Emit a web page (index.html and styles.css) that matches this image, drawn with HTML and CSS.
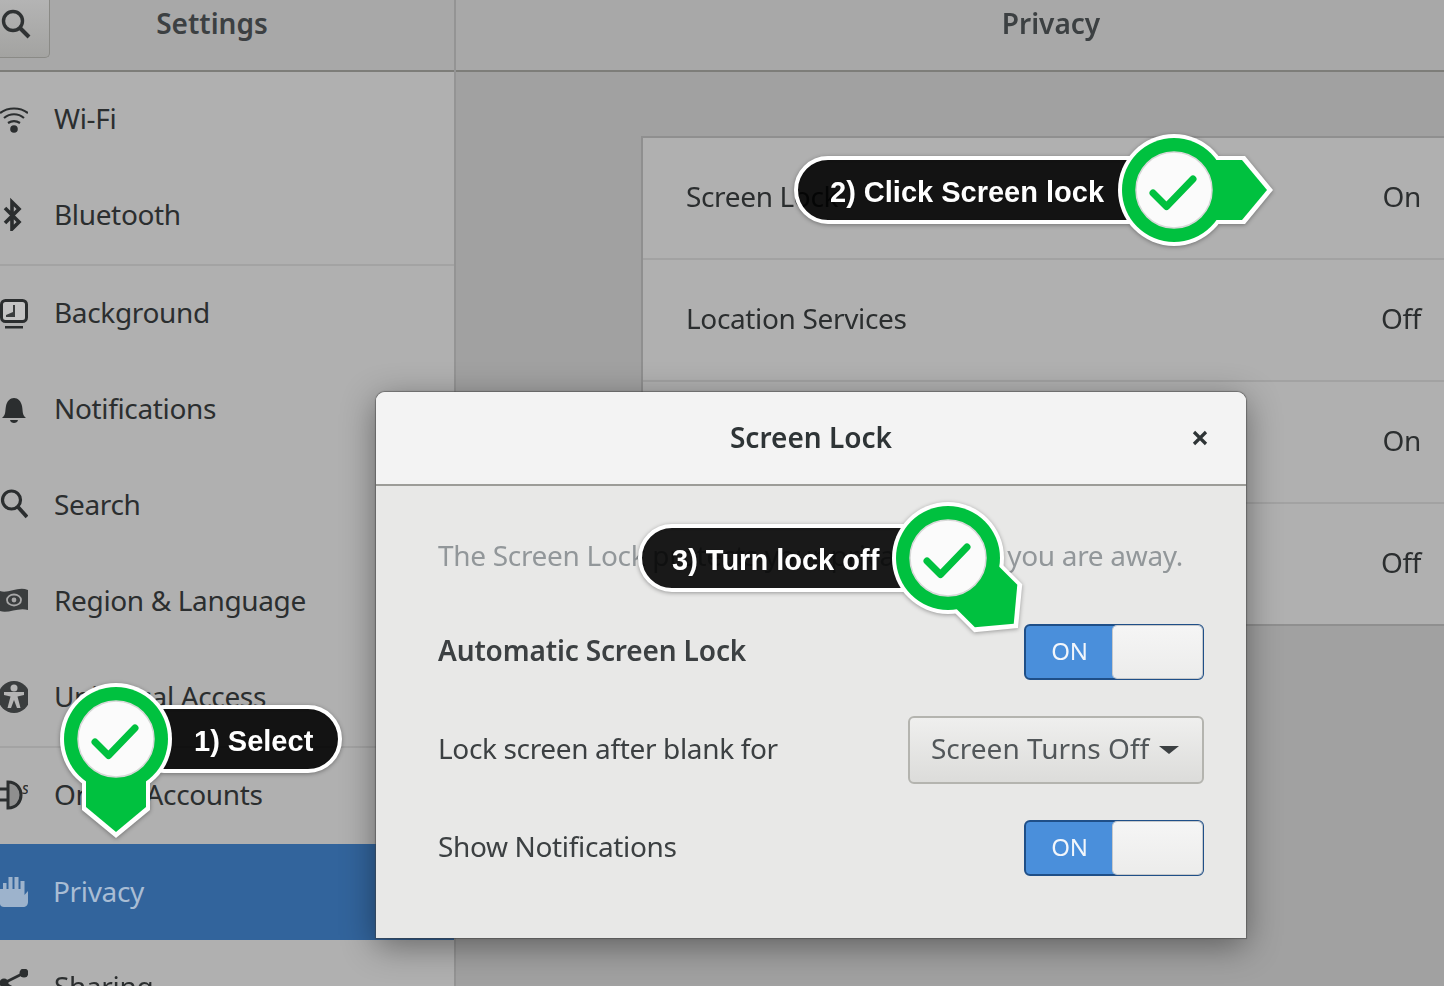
FILE: index.html
```html
<!DOCTYPE html>
<html>
  <head>
    <meta charset="utf-8" />
    <title>Settings - Privacy</title>
    <link rel="stylesheet" href="styles.css">
  </head>

  <body>
    <!-- shared pin shape for the three callouts -->
    <svg class="defs" width="0" height="0">
      <defs>
        <g id="pin-body">
          <circle cx="0" cy="0" r="56" fill="#fff" />
          <polygon points="-34,0 34,0 34,71 0,99 -34,71" fill="#fff" />
          <circle cx="0" cy="0" r="52" fill="#00c13f" />
          <polygon points="-30,0 30,0 30,68 0,93 -30,68" fill="#00c13f" />
        </g>
        <g id="pin-face">
          <circle cx="0" cy="0" r="38" fill="#fbfbfb" stroke="#d8d8d8" stroke-width="1.5" />
          <path d="M-21 3 L-7.5 16.5 L19 -11" fill="none" stroke="#00c13f" stroke-width="7" stroke-linecap="round" stroke-linejoin="round" />
        </g>
      </defs>
    </svg>

    <div class="screen">
      <!-- Sidebar -->
      <aside class="sidebar">
        <header class="bar">
          <button class="search-button">
            <svg width="32" height="40" viewBox="0 0 32 40"><circle cx="13" cy="12" r="9.5" fill="none" stroke="#2f3233" stroke-width="3.4" /><path d="M20 19 L29 28" stroke="#2f3233" stroke-width="4" /></svg>
          </button>
          <h1 class="bar-title bar-title-side">Settings</h1>
        </header>

        <ul class="nav">
          <li class="nav-item">
            <svg class="nav-icon" viewBox="0 0 28 34"><g fill="none" stroke="#2b2e2f" stroke-width="2.2"><path d="M0 12 C8 6 20 6 28 12" /><path d="M4 17 C10 12 18 12 24 17" /><path d="M8 22 C12 19.500 16 19.500 20 22" /></g><circle cx="14" cy="28" r="3.800" fill="#2b2e2f" /></svg>
            <span>Wi-Fi</span>
          </li>
          <li class="nav-item">
            <svg class="nav-icon" viewBox="0 0 28 34"><path d="M5 11 L19 25 L12 32 V5 L19 12 L5 26" fill="none" stroke="#2b2e2f" stroke-width="3.600" /></svg>
            <span>Bluetooth</span>
          </li>
          <li class="nav-sep"></li>
          <li class="nav-item">
            <svg class="nav-icon" viewBox="0 0 28 34"><rect x="1.500" y="5.500" width="25" height="21" rx="4" fill="#c4c4c4" stroke="#2b2e2f" stroke-width="3" /><path d="M6 22 H15 V10 H13 V17 L6 20 Z" fill="#3a3d3e" /><rect x="5" y="31" width="18" height="2.500" fill="#2b2e2f" /></svg>
            <span>Background</span>
          </li>
          <li class="nav-item">
            <svg class="nav-icon" viewBox="0 0 28 34"><path d="M2 27 C6 24 5 20 6 15 C7 10 10 7 14 7 C18 7 21 10 22 15 C23 20 22 24 26 27 Z" fill="#2b2e2f" /><path d="M10 29 H18 C17.500 33 10.500 33 10 29 Z" fill="#2b2e2f" /></svg>
            <span>Notifications</span>
          </li>
          <li class="nav-item">
            <svg class="nav-icon" viewBox="0 0 28 34"><circle cx="11.500" cy="13" r="9" fill="none" stroke="#2b2e2f" stroke-width="3.200" /><path d="M18 20 L27 30" stroke="#2b2e2f" stroke-width="3.800" /></svg>
            <span>Search</span>
          </li>
          <li class="nav-item">
            <svg class="nav-icon" viewBox="0 0 28 34"><path d="M0 8 C8 11 18 3 28 7 V27 C18 24 8 31 0 28 Z" fill="#3a3d3e" /><ellipse cx="14" cy="17" rx="7" ry="5.500" fill="none" stroke="#a8a8a8" stroke-width="1.800" /><circle cx="14" cy="17" r="2.400" fill="#a8a8a8" /></svg>
            <span>Region &amp; Language</span>
          </li>
          <li class="nav-item">
            <svg class="nav-icon" viewBox="0 0 28 34"><circle cx="14" cy="18" r="16" fill="#3a3d3e" /><circle cx="14" cy="9" r="3.500" fill="#b5b5b5" /><path d="M4 13 L24 13 L24 16 L17.500 17.500 L20.500 29 L17 29 L14 21 L11 29 L7.500 29 L10.500 17.500 L4 16 Z" fill="#b5b5b5" /></svg>
            <span>Universal Access</span>
          </li>
          <li class="nav-sep"></li>
          <li class="nav-item">
            <svg class="nav-icon" viewBox="0 0 28 34"><path d="M0 12 H8 M0 23 H8" stroke="#2b2e2f" stroke-width="3" /><path d="M8 5 V31 C17 31 21 24 21 18 C21 12 17 5 8 5 Z" fill="#8f8f8f" stroke="#2b2e2f" stroke-width="3" /><text class="nav-icon-s" x="22" y="17">s</text></svg>
            <span>Online Accounts</span>
          </li>
          <li class="nav-item nav-item-active">
            <svg class="nav-icon" viewBox="0 0 28 34"><path d="M0 15 H3 V9 H6.500 V15 H8.500 V3 H12.500 V15 H14.500 V3 H18.500 V15 H20.500 V7 H24.500 V21 L28 17 V28 C28 31 26 33 23 33 H4 C2 33 0 32 0 30 Z" fill="#9db3cc" /></svg>
            <span>Privacy</span>
          </li>
          <li class="nav-item">
            <svg class="nav-icon" viewBox="0 0 28 34"><path d="M4 14 L24 4 M4 14 L24 25" stroke="#2b2e2f" stroke-width="2.600" /><circle cx="24" cy="4" r="4.500" fill="#2b2e2f" /><circle cx="4" cy="14" r="4.500" fill="#2b2e2f" /><circle cx="24" cy="25" r="4.500" fill="#2b2e2f" /></svg>
            <span>Sharing</span>
          </li>
        </ul>
      </aside>

      <!-- Privacy panel -->
      <main class="panel">
        <header class="bar">
          <h1 class="bar-title bar-title-main">Privacy</h1>
        </header>
        <div class="panel-body">
          <ul class="privacy-list">
            <li class="privacy-row"><span>Screen Lock</span><span class="privacy-value">On</span></li>
            <li class="privacy-row"><span>Location Services</span><span class="privacy-value">Off</span></li>
            <li class="privacy-row"><span class="privacy-value">On</span></li>
            <li class="privacy-row"><span class="privacy-value">Off</span></li>
          </ul>
        </div>
      </main>

      <!-- Screen Lock dialog -->
      <section class="dialog">
        <header class="dialog-head">
          <span></span>
          <h2 class="dialog-title">Screen Lock</h2>
          <svg class="dialog-close" width="18" height="18" viewBox="0 0 18 18"><path d="M3 3 L15 15 M15 3 L3 15" stroke="#2e3436" stroke-width="3.200" /></svg>
        </header>
        <div class="dialog-body">
          <p class="dialog-note">The Screen Lock protects your privacy when you are away.</p>
          <div class="setting">
            <strong class="setting-label setting-strong">Automatic Screen Lock</strong>
            <div class="switch"><span class="switch-on">ON</span><span class="switch-knob"></span></div>
          </div>
          <div class="setting">
            <span class="setting-label">Lock screen after blank for</span>
            <button class="dropdown"><span class="dropdown-text">Screen Turns Off</span><i class="dropdown-caret"></i></button>
          </div>
          <div class="setting">
            <span class="setting-label">Show Notifications</span>
            <div class="switch"><span class="switch-on">ON</span><span class="switch-knob"></span></div>
          </div>
        </div>
      </section>
    </div>

    <!-- Callouts -->
    <div class="callout callout-1">
      <span class="callout-text">1) Select</span>
      <svg class="callout-pin" width="120" height="164" viewBox="-60 -60 120 164"><use href="#pin-body" /><use href="#pin-face" /></svg>
    </div>
    <div class="callout callout-2">
      <span class="callout-text">2) Click Screen lock</span>
      <svg class="callout-pin" width="164" height="120" viewBox="-60 -60 164 120"><use href="#pin-body" transform="rotate(-90)" /><use href="#pin-face" /></svg>
    </div>
    <div class="callout callout-3">
      <span class="callout-text">3) Turn lock off</span>
      <svg class="callout-pin" width="140" height="140" viewBox="-60 -60 140 140"><use href="#pin-body" transform="rotate(-45)" /><use href="#pin-face" /></svg>
    </div>
  </body>
</html>
```

FILE: styles.css
```css
html,
body {
  margin: 0;
  height: 100%;
  overflow: hidden;
}
body {
  position: relative;
  font-family: "Noto Sans", "Open Sans", sans-serif;
  font-size: 28px;
  letter-spacing: -0.35px;
  color: #2b2e2f;
  background: #a1a1a1;
}
ul {
  list-style: none;
  margin: 0;
  padding: 0;
}
.defs {
  display: block;
  height: 0;
}

/* base window, slightly soft like the upscaled capture */
.screen {
  display: flex;
  height: 986px;
  overflow: hidden;
  filter: blur(0.5px);
}
.bar {
  display: flex;
  align-items: flex-start;
  height: 72px;
  box-sizing: border-box;
  border-bottom: 2px solid #7d7d79;
  background: #a8a8a8;
}
.bar-title {
  margin: 0;
  flex: 1;
  padding-top: 3px;
  text-align: center;
  font-size: 28px;
  line-height: 40px;
  font-weight: 600;
  letter-spacing: 0;
  color: #3c4042;
}
.bar-title-side {
  padding-right: 80px;
}
.bar-title-main {
  padding-left: 202px;
}
.search-button {
  display: flex;
  align-items: center;
  width: 50px;
  height: 58px;
  padding: 0;
  border: 1px solid #8a8a86;
  border-width: 0 1px 1px 0;
  border-radius: 0 0 5px 0;
  background: linear-gradient(#b4b4b4, #a3a3a1);
}

/* sidebar */
.sidebar {
  flex: none;
  width: 456px;
  box-sizing: border-box;
  background: #b0b0b0;
  border-right: 2px solid #949494;
}
.nav-item {
  display: flex;
  align-items: center;
  gap: 26px;
  height: 96px;
  box-sizing: border-box;
  padding-bottom: 4px;
}
.nav-item-active {
  padding-bottom: 2px;
  background: #32649c;
  color: #a9bdd4;
  gap: 25px;
}
.nav-sep {
  height: 2px;
  background: #a3a3a3;
}
.nav-icon {
  flex: none;
  width: 28px;
  height: 34px;
}
.nav-icon-s {
  font-size: 16px;
  font-style: italic;
  fill: #2b2e2f;
}

/* privacy panel */
.panel {
  flex: 1;
  min-width: 0;
}
.panel-body {
  padding: 64px 0 0 185px;
}
.privacy-list {
  border: solid #8f8f8f;
  border-width: 2px 0 2px 2px;
  background: #b0b0b0;
}
.privacy-row {
  display: flex;
  align-items: center;
  height: 120px;
  padding: 0 23px 0 43px;
  border-bottom: 2px solid #a2a2a2;
}
.privacy-row span {
  padding-bottom: 4px;
}
.privacy-row:last-child {
  border-bottom: none;
}
.privacy-value {
  margin-left: auto;
}

/* dialog */
.dialog {
  position: absolute;
  left: 376px;
  top: 392px;
  width: 870px;
  height: 546px;
  border-radius: 9px 9px 0 0;
  background: #e8e8e7;
  color: #3c4042;
  box-shadow: 0 0 1px 1px rgba(60, 60, 60, 0.5), 0 8px 34px rgba(0, 0, 0, 0.42);
}
.dialog-head {
  display: grid;
  grid-template-columns: 1fr auto 1fr;
  align-items: center;
  height: 92px;
  padding-right: 37px;
  padding-left: 37px;
  border-bottom: 2px solid #9c9c98;
  border-radius: 9px 9px 0 0;
  background: #f3f3f3;
}
.dialog-title {
  margin: 0;
  padding-bottom: 3px;
  font-size: 28px;
  font-weight: 600;
  letter-spacing: 0;
  color: #2e3436;
}
.dialog-close {
  justify-self: end;
}
.dialog-body {
  display: flex;
  flex-direction: column;
  gap: 36px;
  padding: 49px 42px 0 62px;
}
.dialog-note {
  margin: 0 0 13px;
  line-height: 40px;
  letter-spacing: -0.31px;
  color: #92979a;
}
.setting {
  display: flex;
  align-items: center;
  justify-content: space-between;
}
.setting-label {
  padding-bottom: 4px;
}
.setting-strong {
  font-weight: 600;
  letter-spacing: -0.15px;
}
.switch {
  display: flex;
  width: 180px;
  height: 56px;
  box-sizing: border-box;
  border: 2px solid #1f4f88;
  border-radius: 6px;
  background: #4a8fdb;
}
.switch-on {
  flex: none;
  width: 87px;
  text-align: center;
  font-size: 24px;
  line-height: 49px;
  color: #f2f6fb;
}
.switch-knob {
  flex: 1;
  border-radius: 4px;
  background: linear-gradient(#f5f5f5, #ececeb);
  box-shadow: 0 0 0 1px #c6c8ca;
}
.dropdown {
  display: flex;
  align-items: center;
  gap: 10px;
  width: 296px;
  height: 68px;
  box-sizing: border-box;
  padding: 0 0 0 21px;
  border: 2px solid #b4b4af;
  border-radius: 6px;
  background: linear-gradient(#efefee, #dcdcda);
  font: inherit;
  letter-spacing: 0;
  color: #52575a;
}
.dropdown-text {
  padding-bottom: 4px;
}
.dropdown-caret {
  width: 0;
  height: 0;
  border: solid transparent;
  border-width: 8px 10px 0;
  border-top-color: #3c4042;
}

/* callouts */
.callout {
  position: absolute;
  display: flex;
  align-items: center;
  height: 68px;
  box-sizing: border-box;
  border: 4px solid #fff;
  border-radius: 34px;
  background: rgba(0, 0, 0, 0.85);
  filter: drop-shadow(0 1px 2px rgba(0, 0, 0, 0.35));
}
.callout-text {
  padding-top: 4px;
  font-family: "Liberation Sans", Arial, sans-serif;
  font-size: 29px;
  font-weight: 700;
  letter-spacing: 0;
  color: #fff;
  white-space: nowrap;
}
.callout-pin {
  position: absolute;
}
.callout-1 {
  left: 130px;
  top: 705px;
  width: 212px;
  padding-left: 60px;
}
.callout-1 .callout-pin {
  left: -78px;
  top: -30px;
}
.callout-2 {
  left: 794px;
  top: 156px;
  width: 380px;
  padding-left: 32px;
}
.callout-2 .callout-pin {
  left: 316px;
  top: -30px;
}
.callout-3 {
  left: 638px;
  top: 524px;
  width: 310px;
  padding-left: 30px;
}
.callout-3 .callout-pin {
  left: 246px;
  top: -30px;
}
```
